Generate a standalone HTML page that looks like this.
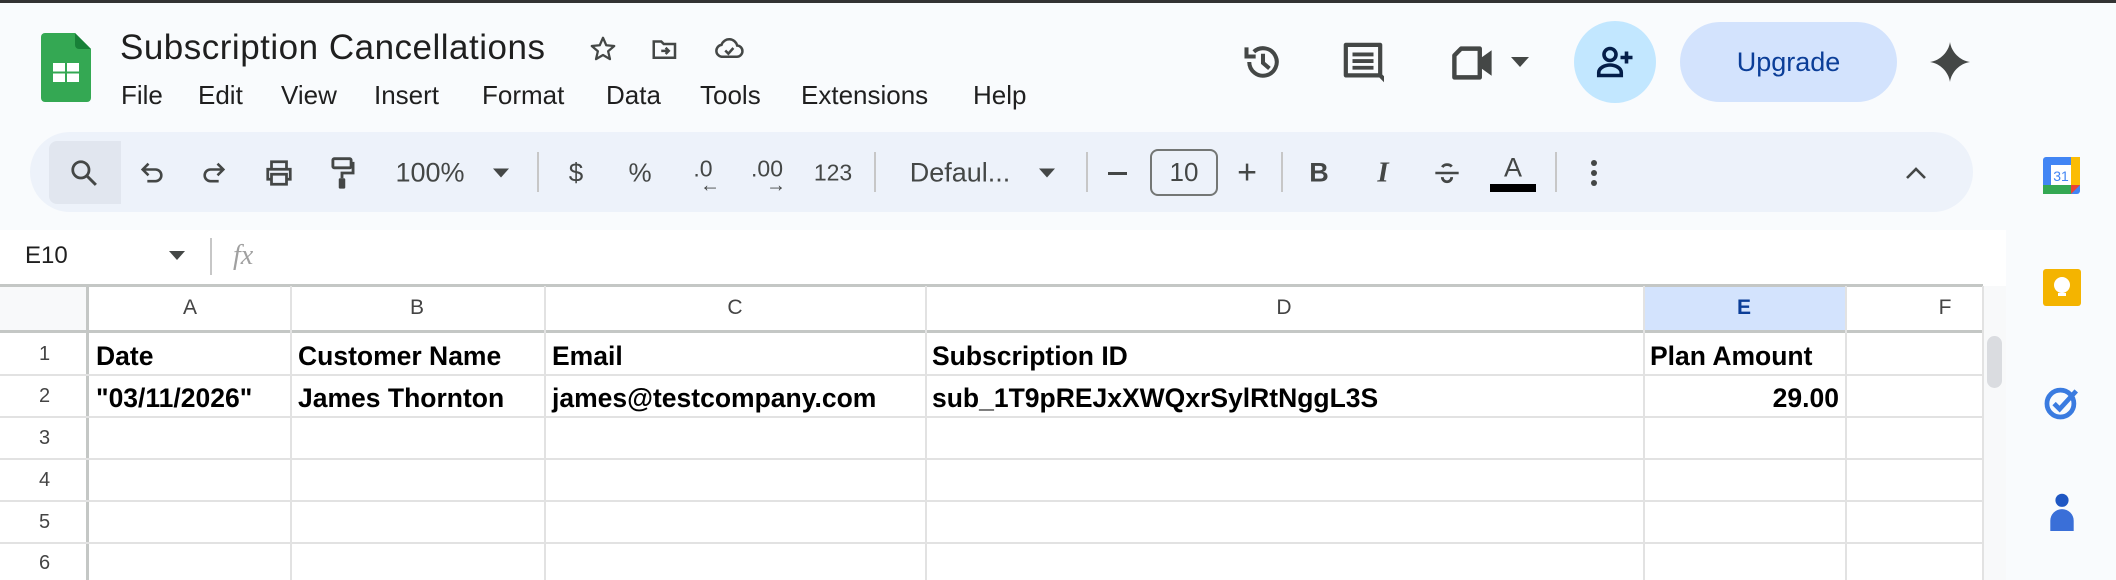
<!DOCTYPE html>
<html><head><meta charset="utf-8"><style>
*{margin:0;padding:0;box-sizing:border-box}
body{width:2116px;height:580px;overflow:hidden;background:#f9fbfd;font-family:"Liberation Sans",Arial,sans-serif;position:relative;color:#1f1f1f}
.a{position:absolute}
.menu{position:absolute;top:80px;font-size:26px;color:#1f1f1f}
.tb{position:absolute;top:173px;transform:translate(-50%,-50%);color:#444746;font-size:24px}
.sep{position:absolute;top:152px;width:2px;height:40px;background:#c7c7c7}
.hl{position:absolute;background:#c4c7c5}
.cell{position:absolute;font-weight:bold;font-size:26.5px;color:#000;white-space:nowrap}
.ch{position:absolute;top:296px;font-size:21px;color:#444;transform:translateX(-50%)}
.rn{position:absolute;left:0;width:89px;text-align:center;font-size:20px;color:#444}
</style></head><body>
<div class="a" style="left:0;top:0;width:2116px;height:3px;background:#333"></div>
<svg class="a" style="left:41px;top:33px" width="50" height="69" viewBox="0 0 50 69"><path d="M4 0H34L50 16V65a4 4 0 0 1-4 4H4a4 4 0 0 1-4-4V4a4 4 0 0 1 4-4z" fill="#34a853"/><path d="M34 0L50 16H38a4 4 0 0 1-4-4z" fill="#188038"/><rect x="12" y="30" width="26" height="19" fill="#fff"/><rect x="24" y="30" width="2" height="19" fill="#34a853"/><rect x="12" y="38.5" width="26" height="2" fill="#34a853"/></svg>
<div class="a" style="left:120px;top:28px;font-size:35px;color:#1f1f1f;letter-spacing:.5px">Subscription Cancellations</div>
<svg class="a" style="left:588px;top:34px" width="30" height="30" viewBox="0 0 24 24"><path d="M12 3l2.6 6 6.4.6-4.9 4.2 1.5 6.3L12 16.8 6.4 20.1l1.5-6.3L3 9.6l6.4-.6z" fill="none" stroke="#444746" stroke-width="1.8" stroke-linejoin="round"/></svg>
<svg class="a" style="left:650px;top:34px" width="30" height="30" viewBox="0 0 24 24"><path d="M3 6h6l2 2h9v11H3z" fill="none" stroke="#444746" stroke-width="2"/><path d="M9 13.5h6m-2.5-2.5l2.5 2.5-2.5 2.5" fill="none" stroke="#444746" stroke-width="2"/></svg>
<svg class="a" style="left:712px;top:33px" width="34" height="30" viewBox="0 0 26 24"><path d="M7 19h12a4.5 4.5 0 0 0 .5-9A6.5 6.5 0 0 0 7 9.5 4.8 4.8 0 0 0 7 19z" fill="none" stroke="#444746" stroke-width="2"/><path d="M10 14l2.5 2.5 4-4.5" fill="none" stroke="#444746" stroke-width="2"/></svg>
<div class="menu" style="left:121px">File</div>
<div class="menu" style="left:198px">Edit</div>
<div class="menu" style="left:281px">View</div>
<div class="menu" style="left:374px">Insert</div>
<div class="menu" style="left:482px">Format</div>
<div class="menu" style="left:606px">Data</div>
<div class="menu" style="left:700px">Tools</div>
<div class="menu" style="left:801px">Extensions</div>
<div class="menu" style="left:973px">Help</div>
<svg class="a" style="left:1241px;top:40px" width="44" height="44" viewBox="0 0 24 24"><path d="M4.5 12A7.5 7.5 0 1 0 7 6.4" fill="none" stroke="#444746" stroke-width="2.2"/><path d="M3 4v5h5" fill="none" stroke="#444746" stroke-width="2.2"/><path d="M12 7.5v5l3.5 3" fill="none" stroke="#444746" stroke-width="2.2"/></svg>
<svg class="a" style="left:1342px;top:41px" width="42" height="44" viewBox="0 0 22 23"><path d="M2 2h18v16l3 3-3-3H2z" fill="none" stroke="#444746" stroke-width="2.2" stroke-linejoin="round"/><path d="M5.5 7h11M5.5 10.5h11M5.5 14h11" stroke="#444746" stroke-width="2"/></svg>
<svg class="a" style="left:1451px;top:46px" width="44" height="34" viewBox="0 0 26 20"><path d="M6 1.5h11v17H2V5.5z" fill="none" stroke="#444746" stroke-width="2.6" stroke-linejoin="round"/><path d="M17 7.5l7-5v15l-7-5z" fill="#444746"/></svg>
<svg class="a" style="left:1511px;top:57px" width="18" height="10"><path d="M0 0h18L9 10z" fill="#444746"/></svg>
<div class="a" style="left:1574px;top:21px;width:82px;height:82px;border-radius:50%;background:#c2e7ff"></div>
<svg class="a" style="left:1596px;top:44px" width="40" height="36" viewBox="0 0 26 24"><circle cx="9" cy="7" r="4" fill="none" stroke="#041e49" stroke-width="2.4"/><path d="M1.5 21v-2c0-3 4-5 7.5-5s7.5 2 7.5 5v2z" fill="none" stroke="#041e49" stroke-width="2.4"/><path d="M20 5v8M16 9h8" stroke="#041e49" stroke-width="2.4"/></svg>
<div class="a" style="left:1680px;top:22px;width:217px;height:80px;border-radius:40px;background:#d3e3fd;color:#0b3e98;font-size:27px;text-align:center;line-height:80px">Upgrade</div>
<svg class="a" style="left:1930px;top:42px" width="40" height="40" viewBox="0 0 24 24"><path d="M12 0C12.8 6 18 11.2 24 12 18 12.8 12.8 18 12 24 11.2 18 6 12.8 0 12 6 11.2 11.2 6 12 0z" fill="#444746"/></svg>
<div class="a" style="left:30px;top:132px;width:1943px;height:80px;border-radius:40px;background:#edf2fa"></div>
<div class="a" style="left:49px;top:141px;width:72px;height:63px;border-radius:8px 0 0 8px;background:#e1e6ef"></div>
<svg class="tb" style="left:84px" width="30" height="30" viewBox="0 0 24 24"><circle cx="9.5" cy="9.5" r="6.5" fill="none" stroke="#444746" stroke-width="2.2"/><path d="M14.5 14.5l7 7" stroke="#444746" stroke-width="2.4"/></svg>
<svg class="tb" style="left:152px" width="28" height="28" viewBox="0 0 24 24"><path d="M5 9h10a5 5 0 0 1 0 10H8" fill="none" stroke="#444746" stroke-width="2.2"/><path d="M9 4L4 9l5 5" fill="none" stroke="#444746" stroke-width="2.2"/></svg>
<svg class="tb" style="left:214px" width="28" height="28" viewBox="0 0 24 24"><path d="M19 9H9a5 5 0 0 0 0 10h7" fill="none" stroke="#444746" stroke-width="2.2"/><path d="M15 4l5 5-5 5" fill="none" stroke="#444746" stroke-width="2.2"/></svg>
<svg class="tb" style="left:279px" width="32" height="30" viewBox="0 0 24 24"><path d="M6 8V3h12v5M6 17H3V9h18v8h-3M6 13h12v8H6z" fill="none" stroke="#444746" stroke-width="2.2"/></svg>
<svg class="tb" style="left:342px" width="26" height="34" viewBox="0 0 20 26"><rect x="3" y="2" width="14" height="7" rx="1" fill="none" stroke="#444746" stroke-width="2.2"/><path d="M17 5.5h1.5V13H10v4" fill="none" stroke="#444746" stroke-width="2.2"/><rect x="7.5" y="17" width="5" height="8" rx="1" fill="#444746"/></svg>
<div class="tb" style="left:430px;font-size:27px">100%</div>
<svg class="tb" style="left:501px" width="16" height="9"><path d="M0 0h16L8 9z" fill="#444746"/></svg>
<div class="sep" style="left:537px"></div>
<div class="tb" style="left:576px;font-size:26px">$</div>
<div class="tb" style="left:640px;font-size:26px">%</div>
<div class="tb" style="left:703px;font-size:23px;top:169px">.0</div>
<div class="tb" style="left:710px;font-size:20px;top:186px;font-weight:bold">←</div>
<div class="tb" style="left:767px;font-size:23px;top:169px">.00</div>
<div class="tb" style="left:776px;font-size:20px;top:186px;font-weight:bold">→</div>
<div class="tb" style="left:833px;font-size:23px">123</div>
<div class="sep" style="left:874px"></div>
<div class="tb" style="left:960px;font-size:27px">Defaul...</div>
<svg class="tb" style="left:1047px" width="16" height="9"><path d="M0 0h16L8 9z" fill="#444746"/></svg>
<div class="sep" style="left:1086px"></div>
<div class="a" style="left:1108px;top:172px;width:19px;height:3px;background:#444746"></div>
<div class="a" style="left:1150px;top:149px;width:68px;height:47px;border:2px solid #747775;border-radius:8px;font-size:26px;text-align:center;line-height:43px;color:#444746">10</div>
<div class="tb" style="left:1247px;font-size:34px;font-weight:300">+</div>
<div class="sep" style="left:1281px"></div>
<div class="tb" style="left:1319px;font-size:27px;font-weight:bold">B</div>
<div class="tb" style="left:1383px;font-size:29px;font-style:italic;font-family:'Liberation Serif',serif;font-weight:bold">I</div>
<svg class="tb" style="left:1447px" width="30" height="28" viewBox="0 0 24 24"><path d="M2 12h20" stroke="#444746" stroke-width="2.2"/><path d="M16 6.5A4.5 3.5 0 0 0 8 7M8 15.5c0 2.5 2 4 4 4s4-1.5 4-4" fill="none" stroke="#444746" stroke-width="2.4"/></svg>
<div class="tb" style="left:1513px;font-size:27px;top:168px">A</div>
<div class="a" style="left:1490px;top:184px;width:46px;height:8px;background:#000"></div>
<div class="sep" style="left:1555px"></div>
<svg class="tb" style="left:1594px" width="8" height="26"><circle cx="4" cy="3" r="3" fill="#444746"/><circle cx="4" cy="13" r="3" fill="#444746"/><circle cx="4" cy="23" r="3" fill="#444746"/></svg>
<svg class="tb" style="left:1916px" width="22" height="14"><path d="M2 12l9-9 9 9" fill="none" stroke="#444746" stroke-width="2.6"/></svg>
<div class="a" style="left:0;top:230px;width:2006px;height:56px;background:#fff"></div>
<div class="a" style="left:25px;top:242px;font-size:24px">E10</div>
<svg class="a" style="left:169px;top:251px" width="16" height="9"><path d="M0 0h16L8 9z" fill="#444746"/></svg>
<div class="a" style="left:210px;top:238px;width:2px;height:37px;background:#c7c7c7"></div>
<div class="a" style="left:233px;top:240px;font-size:28px;font-style:italic;font-family:'Liberation Serif',serif;color:#a0a0a0">fx</div>
<div class="a" style="left:0;top:284px;width:2006px;height:296px;background:#fff"></div>
<div class="a" style="left:0;top:286px;width:86px;height:44px;background:#f8f9fa"></div>
<div class="a" style="left:1643px;top:286px;width:202px;height:47px;background:#d3e3fd"></div>
<div class="hl" style="left:0;top:284px;width:1983px;height:3px"></div>
<div class="hl" style="left:0;top:330px;width:1983px;height:3px"></div>
<div class="hl" style="left:86px;top:286px;width:3px;height:294px"></div>
<div class="hl" style="left:0;top:374px;width:1983px;height:2px;background:#e2e2e2"></div>
<div class="hl" style="left:0;top:416px;width:1983px;height:2px;background:#e2e2e2"></div>
<div class="hl" style="left:0;top:458px;width:1983px;height:2px;background:#e2e2e2"></div>
<div class="hl" style="left:0;top:500px;width:1983px;height:2px;background:#e2e2e2"></div>
<div class="hl" style="left:0;top:542px;width:1983px;height:2px;background:#e2e2e2"></div>
<div class="hl" style="left:290px;top:286px;width:2px;height:294px;background:#e2e2e2"></div>
<div class="hl" style="left:544px;top:286px;width:2px;height:294px;background:#e2e2e2"></div>
<div class="hl" style="left:925px;top:286px;width:2px;height:294px;background:#e2e2e2"></div>
<div class="hl" style="left:1643px;top:286px;width:2px;height:294px;background:#e2e2e2"></div>
<div class="hl" style="left:1845px;top:286px;width:2px;height:294px;background:#e2e2e2"></div>
<div class="hl" style="left:1982px;top:286px;width:2px;height:294px;background:#e2e2e2"></div>
<div class="a" style="left:1984px;top:286px;width:22px;height:294px;background:#f8f9fa"></div>
<div class="a" style="left:1987px;top:336px;width:15px;height:52px;border-radius:8px;background:#dadce0"></div>
<div class="ch" style="left:190px">A</div>
<div class="ch" style="left:417px">B</div>
<div class="ch" style="left:735px">C</div>
<div class="ch" style="left:1284px">D</div>
<div class="ch" style="left:1744px;font-weight:bold;color:#0b3e98">E</div>
<div class="ch" style="left:1945px">F</div>
<div class="rn" style="top:343px">1</div>
<div class="rn" style="top:385px">2</div>
<div class="rn" style="top:427px">3</div>
<div class="rn" style="top:469px">4</div>
<div class="rn" style="top:511px">5</div>
<div class="rn" style="top:552px">6</div>
<div class="cell" style="left:96px;top:341px">Date</div>
<div class="cell" style="left:298px;top:341px">Customer Name</div>
<div class="cell" style="left:552px;top:341px">Email</div>
<div class="cell" style="left:932px;top:341px">Subscription ID</div>
<div class="cell" style="left:1650px;top:341px">Plan Amount</div>
<div class="cell" style="left:96px;top:383px">"03/11/2026"</div>
<div class="cell" style="left:298px;top:383px">James Thornton</div>
<div class="cell" style="left:552px;top:383px">james@testcompany.com</div>
<div class="cell" style="left:932px;top:383px">sub_1T9pREJxXWQxrSylRtNggL3S</div>
<div class="cell" style="left:1643px;top:383px;width:196px;text-align:right">29.00</div>
<svg class="a" style="left:2043px;top:157px" width="37" height="37" viewBox="0 0 37 37"><rect width="37" height="37" rx="3" fill="#4285f4"/><rect x="28" y="0" width="9" height="28" fill="#fbbc04"/><rect x="0" y="28" width="28" height="9" fill="#34a853"/><path d="M28 28h9l-9 9z" fill="#ea4335"/><rect x="8" y="8" width="20" height="20" fill="#fff"/><text x="18" y="24" font-size="14" text-anchor="middle" fill="#4285f4" font-family="Liberation Sans">31</text></svg>
<svg class="a" style="left:2043px;top:269px" width="38" height="37" viewBox="0 0 38 37"><rect width="38" height="37" rx="3" fill="#f4b400"/><circle cx="19" cy="16" r="8" fill="#fff"/><rect x="15" y="24" width="8" height="3" fill="#fff"/></svg>
<svg class="a" style="left:2043px;top:383px" width="38" height="38" viewBox="0 0 24 24"><circle cx="11" cy="13" r="8.5" fill="none" stroke="#3a7be0" stroke-width="3"/><path d="M7 13l3.5 3.5L21 5" fill="none" stroke="#3a7be0" stroke-width="3"/></svg>
<svg class="a" style="left:2047px;top:493px" width="30" height="38" viewBox="0 0 20 26"><circle cx="10" cy="5" r="4.5" fill="#1f57c3"/><path d="M2 26v-7a8 8 0 0 1 16 0v7z" fill="#3a6fd8"/></svg>
</body></html>
